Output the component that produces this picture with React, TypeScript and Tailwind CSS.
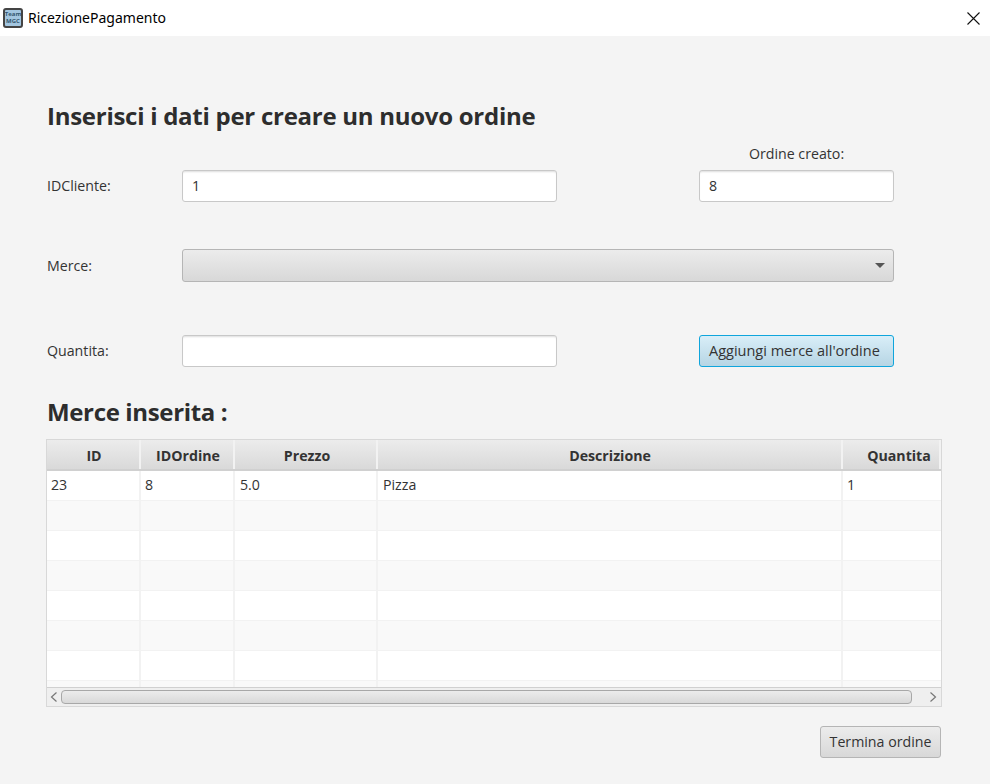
const columns = [
  { name: "ID", width: "w-[94px]", head: "pl-[2px]", cell: "pl-[4px]" },
  { name: "IDOrdine", width: "w-[94px]", head: "pl-[2px]", cell: "pl-[4px]" },
  { name: "Prezzo", width: "w-[143px]", head: "pl-[3px]", cell: "pl-[5px]" },
  { name: "Descrizione", width: "w-[465px]", head: "pl-[1px]", cell: "pl-[5px]" },
  { name: "Quantita", width: "w-[98px]", head: "pl-[16px]", cell: "pl-[4px]" },
];

const firstRow = ["23", "8", "5.0", "Pizza", "1"];
const emptyRows = [1, 2, 3, 4, 5, 6, 7];

const fieldClass =
  "h-[32px] rounded-[3px] border border-[#c8c8c8] bg-white px-[9px] flex items-center text-[14.2px] text-[#333] shadow-[inset_0_2px_2px_-1px_#dddddd]";
const buttonClass =
  "h-[32px] rounded-[3px] border border-[#b5b5b5] bg-gradient-to-b from-[#ececec] to-[#d8d8d8] flex items-center text-[14.2px] text-[#333]";

function TableRow({ index, cells }: { index: number; cells?: string[] }) {
  return (
    <div className={`flex h-[30px] shrink-0 ${index % 2 === 0 ? "bg-white" : "bg-[#f9f9f9]"}`}>
      {columns.map((col, i) => (
        <div
          key={col.name}
          className={`${col.width} ${col.cell} flex items-center pb-[2px] text-[14.2px] text-[#333] ${
            i < columns.length - 1 ? "border-r-2 border-[#f2f2f2]" : ""
          } border-b border-[#f2f2f2]`}
        >
          {cells ? cells[i] : ""}
        </div>
      ))}
    </div>
  );
}

export default function App() {
  return (
    <div className="w-[990px] h-[784px] flex flex-col bg-[#f4f4f4] overflow-hidden font-['Open_Sans','Liberation_Sans',sans-serif]">
      <header className="h-[36px] shrink-0 bg-white flex items-center pl-[3px] pr-[10px]">
        <div className="w-[20px] h-[20px] rounded-[3px] border-2 border-[#444] bg-[#a3c6e0] flex flex-col items-center justify-center text-[6px] leading-[7px] font-bold text-[#33566f]">
          <span>Team</span>
          <span>MGC</span>
        </div>
        <span className="ml-[5px] pb-[2px] text-[14px] text-black font-['Noto_Sans','Open_Sans',sans-serif]">RicezionePagamento</span>
        <svg className="ml-auto" width="13" height="13" viewBox="0 0 13 13" fill="none" stroke="#111" strokeWidth="1.1">
          <path d="M0.5 0.5 L12.5 12.5 M12.5 0.5 L0.5 12.5" />
        </svg>
      </header>

      <main className="flex-1 pl-[47px] pr-[48px] flex flex-col">
        <h1 className="mt-[63px] h-[34px] flex items-center text-[24px] font-bold text-[#2d2d2d] tracking-[-0.27px]">
          Inserisci i dati per creare un nuovo ordine
        </h1>

        <div className="mt-[13px] flex items-end">
          <span className="w-[135px] h-[32px] flex items-center text-[14.2px] text-[#333]">IDCliente:</span>
          <div className={`${fieldClass} w-[375px]`}>1</div>
          <div className="ml-[142px] w-[195px] flex flex-col">
            <span className="h-[16px] mb-[8px] flex items-center justify-center text-[14.2px] text-[#333]">Ordine creato:</span>
            <div className={fieldClass}>8</div>
          </div>
        </div>

        <div className="mt-[47px] flex items-center">
          <span className="w-[135px] text-[14.2px] text-[#333]">Merce:</span>
          <div className={`${buttonClass} w-[712px] h-[33px] justify-end pr-[8px]`}>
            <svg width="10" height="5" viewBox="0 0 10 5">
              <path d="M0 0 H10 L5 5 Z" fill="#555" />
            </svg>
          </div>
        </div>

        <div className="mt-[53px] flex items-center">
          <span className="w-[135px] text-[14.2px] text-[#333]">Quantita:</span>
          <div className={`${fieldClass} w-[375px]`} />
          <div className="ml-[142px] w-[195px] h-[32px] rounded-[3px] border-[1.5px] border-[#0fa5dc] bg-gradient-to-b from-[#d9eef8] to-[#b6d5e4] flex items-center pl-[9px] text-[14.5px] text-[#333]">
            Aggiungi merce all'ordine
          </div>
        </div>

        <h2 className="mt-[28px] h-[34px] flex items-center text-[24px] font-bold text-[#2d2d2d] tracking-[-0.35px]">Merce inserita :</h2>

        <div className="mt-[10px] -ml-[1px] w-[896px] h-[268px] border border-[#d8d8d8] flex flex-col overflow-hidden">
          <div className="flex h-[31px] shrink-0 border-b-2 border-[#d0d0d0] bg-gradient-to-b from-[#ececec] to-[#d9d9d9]">
            {columns.map((col) => (
              <div
                key={col.name}
                className={`${col.width} ${col.head} pt-[2px] flex items-center justify-center border-r-2 border-[#f2f2f2] text-[14.2px] font-bold text-[#333]`}
              >
                {col.name}
              </div>
            ))}
          </div>
          <div className="flex-1 flex flex-col overflow-hidden">
            <TableRow index={0} cells={firstRow} />
            {emptyRows.map((r) => (
              <TableRow key={r} index={r} />
            ))}
          </div>
          <div className="h-[19px] shrink-0 flex items-center border-t border-[#d0d0d0] bg-[#efefef] px-[3px]">
            <svg width="8" height="10" viewBox="0 0 8 10" fill="none" stroke="#777" strokeWidth="1.2">
              <path d="M6.5 0.5 L1.5 5 L6.5 9.5" />
            </svg>
            <div className="ml-[3px] w-[851px] h-[14px] rounded-[4px] border border-[#a8a8a8] bg-gradient-to-b from-[#ececec] to-[#d9d9d9]" />
            <svg className="ml-auto mr-[1px]" width="8" height="10" viewBox="0 0 8 10" fill="none" stroke="#777" strokeWidth="1.2">
              <path d="M1.5 0.5 L6.5 5 L1.5 9.5" />
            </svg>
          </div>
        </div>

        <div className="mt-[19px] flex justify-end pr-[1px]">
          <div className={`${buttonClass} w-[121px] justify-center`}>Termina ordine</div>
        </div>
      </main>
    </div>
  );
}
